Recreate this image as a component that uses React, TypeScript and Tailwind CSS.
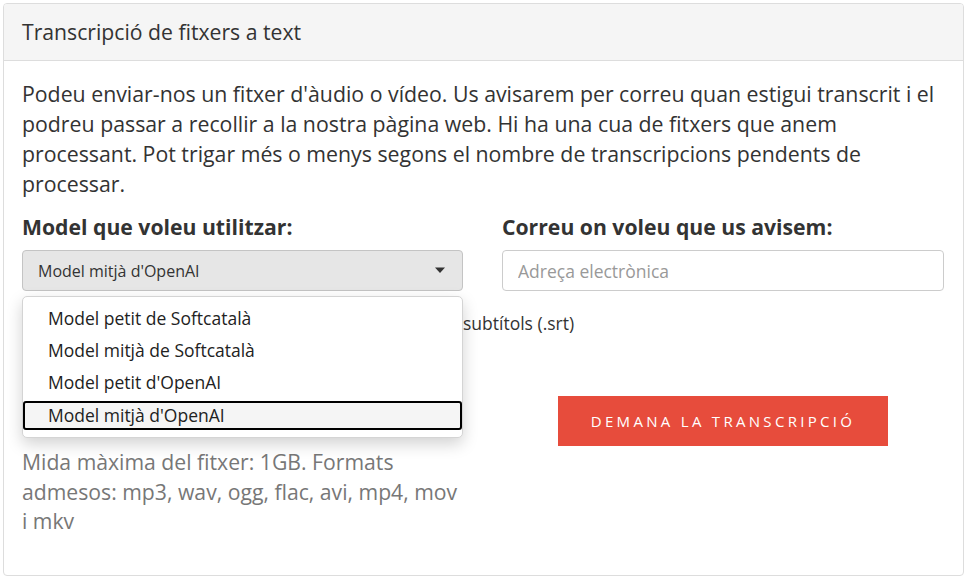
import { useState } from "react";

const models = [
  "Model petit de Softcatalà",
  "Model mitjà de Softcatalà",
  "Model petit d'OpenAI",
  "Model mitjà d'OpenAI",
];

export default function App() {
  const [model, setModel] = useState("Model mitjà d'OpenAI");
  const [open, setOpen] = useState(true);

  return (
    <div className="bg-white min-h-[577px] pt-[3px] pl-[3px] font-['Open_Sans',sans-serif] text-[#333]">
      <div className="w-[961px] h-[573px] border border-[#dddddd] rounded-[4px] overflow-hidden">
        <div className="h-[57px] bg-[#f5f5f5] border-b border-[#dddddd] px-[18px] flex items-center">
          <h3 className="text-[21.2px]">Transcripció de fitxers a text</h3>
        </div>

        <div className="px-[18px] pt-[18px]">
          <p className="text-[21.3px] leading-[30px]">
            Podeu enviar-nos un fitxer d'àudio o vídeo. Us avisarem per correu quan estigui transcrit i el
            podreu passar a recollir a la nostra pàgina web. Hi ha una cua de fitxers que anem processant.
            Pot trigar més o menys segons el nombre de transcripcions pendents de processar.
          </p>

          <div className="grid grid-cols-[441px_442px] gap-x-[39px] mt-[13px]">
            <div>
              <label className="block text-[21.2px] font-bold leading-[30px]">Model que voleu utilitzar:</label>
              <div className="relative mt-[8px]">
                <button
                  onClick={() => setOpen(!open)}
                  className="w-full h-[41px] bg-[#e6e6e6] border border-[#c4c4c4] rounded-[4px] pl-[15px] pr-[16px] flex items-center justify-between text-[16px] text-[#333]"
                >
                  <span>{model}</span>
                  <svg width="12" height="7" viewBox="0 0 12 7">
                    <path d="M1 0.5h10L6 6z" fill="#333" />
                  </svg>
                </button>
                {open && (
                  <div className="absolute z-10 left-0 top-[46px] w-full h-[142px] bg-white border border-[#d4d4d4] rounded-[5px] shadow-[0_6px_16px_rgba(0,0,0,0.18)] pt-[7px] flex flex-col gap-[4px]">
                    {models.map((m) => (
                      <div
                        key={m}
                        onClick={() => {
                          setModel(m);
                          setOpen(false);
                        }}
                        className={
                          m === model
                            ? "h-[29px] mt-[1px] pl-[23px] flex items-center text-[17.5px] text-[#222] bg-[#f5f5f5] border-2 border-black rounded-[3px]"
                            : "h-[28px] pl-[25px] flex items-center text-[17.5px] text-[#222]"
                        }
                      >
                        {m}
                      </div>
                    ))}
                  </div>
                )}
              </div>
            </div>

            <div>
              <label className="block text-[21.2px] font-bold leading-[30px]">Correu on voleu que us avisem:</label>
              <input
                type="email"
                placeholder="Adreça electrònica"
                className="mt-[8px] w-full h-[41px] border border-[#cccccc] rounded-[4px] px-[15px] text-[17.5px] placeholder:text-[#999] outline-none"
              />
            </div>
          </div>

          <label className="flex items-center gap-[6px] mt-[19px] h-[26px] text-[17.5px]">
            <input type="checkbox" className="w-[13px] h-[13px]" />
            Marqueu aquesta casella si voleu rebre un fitxer de subtítols (.srt)
          </label>

          <div className="grid grid-cols-[441px_442px] gap-x-[39px]">
            <div>
              <div className="mt-[24px] h-[28px] flex items-center text-[17.5px]">
                <span className="font-bold">Fitxer:</span>
                <input type="file" className="ml-2 text-[15px]" />
              </div>
              <p className="mt-[59px] text-[21.2px] leading-[29.5px] text-[#777]">
                Mida màxima del fitxer: 1GB. Formats admesos: mp3, wav, ogg, flac, avi, mp4, mov i mkv
              </p>
            </div>
            <div className="flex justify-center pt-[60px]">
              <button className="w-[330px] h-[50px] bg-[#e74c3c] text-white text-[15px] tracking-[3.3px] uppercase">
                Demana la transcripció
              </button>
            </div>
          </div>
        </div>
      </div>
    </div>
  );
}
